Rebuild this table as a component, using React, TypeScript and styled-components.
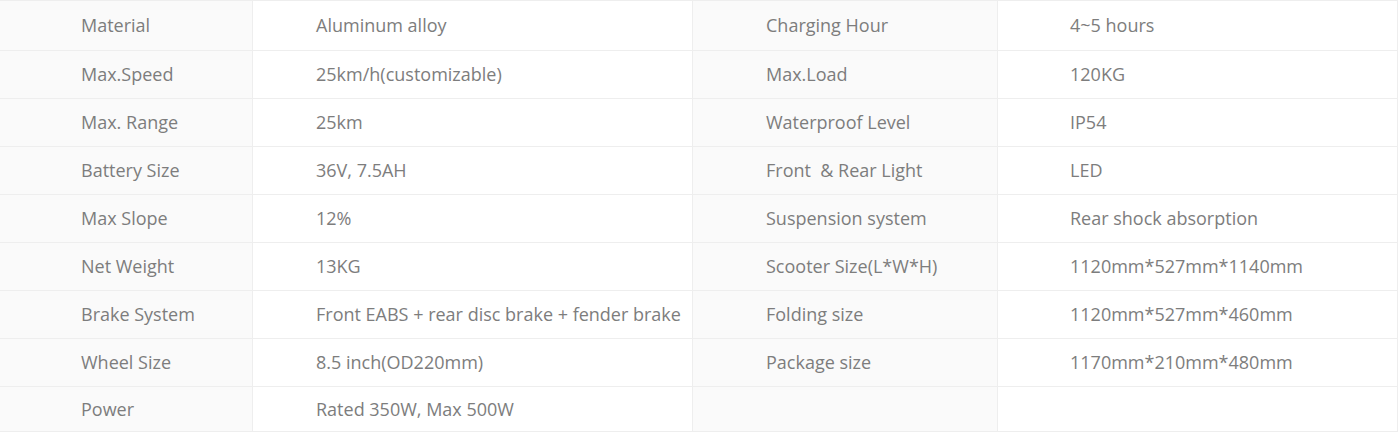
import React from "react";
import styled, { createGlobalStyle } from "styled-components";

const GlobalStyle = createGlobalStyle`
  body {
    margin: 0;
    background: #fff;
    font-family: "Open Sans", "Liberation Sans", sans-serif;
  }
`;

interface Spec {
  label: string;
  value: string;
}

const left: Spec[] = [
  { label: "Material", value: "Aluminum alloy" },
  { label: "Max.Speed", value: "25km/h(customizable)" },
  { label: "Max. Range", value: "25km" },
  { label: "Battery Size", value: "36V, 7.5AH" },
  { label: "Max Slope", value: "12%" },
  { label: "Net Weight", value: "13KG" },
  { label: "Brake System", value: "Front EABS + rear disc brake + fender brake" },
  { label: "Wheel Size", value: "8.5 inch(OD220mm)" },
  { label: "Power", value: "Rated 350W, Max 500W" },
];

const right: Spec[] = [
  { label: "Charging Hour", value: "4~5 hours" },
  { label: "Max.Load", value: "120KG" },
  { label: "Waterproof Level", value: "IP54" },
  { label: "Front  & Rear Light", value: "LED" },
  { label: "Suspension system", value: "Rear shock absorption" },
  { label: "Scooter Size(L*W*H)", value: "1120mm*527mm*1140mm" },
  { label: "Folding size", value: "1120mm*527mm*460mm" },
  { label: "Package size", value: "1170mm*210mm*480mm" },
  { label: "", value: "" },
];

const App = () => {
  return (
    <>
      <GlobalStyle />
      <SpecTable>
        {left.map((row, i) => (
          <Row key={i} $first={i === 0} $last={i === left.length - 1}>
            <Cell $label $pad={81}>{row.label}</Cell>
            <Cell $pad={63}>{row.value}</Cell>
            <Cell $label $pad={73}>{right[i].label}</Cell>
            <Cell $pad={72}>{right[i].value}</Cell>
          </Row>
        ))}
      </SpecTable>
    </>
  );
};

export default App;

const SpecTable = styled.div`
  width: 1398px;
  border-top: 1px solid #eee;
  display: flex;
  flex-direction: column;
`;

const Row = styled.div<{ $first?: boolean; $last?: boolean }>`
  display: grid;
  grid-template-columns: 253px 440px 305px 400px;
  height: ${(p) => (p.$first ? 50 : p.$last ? 45 : 48)}px;
`;

const Cell = styled.div<{ $label?: boolean; $pad: number }>`
  display: flex;
  align-items: center;
  padding-left: ${(p) => p.$pad}px;
  padding-bottom: 1px;
  border-right: 1px solid #eee;
  border-bottom: 1px solid #eee;
  background: ${(p) => (p.$label ? "#fafafa" : "#fff")};
  color: #7d7d7d;
  font-size: 18px;
  white-space: pre;
`;
